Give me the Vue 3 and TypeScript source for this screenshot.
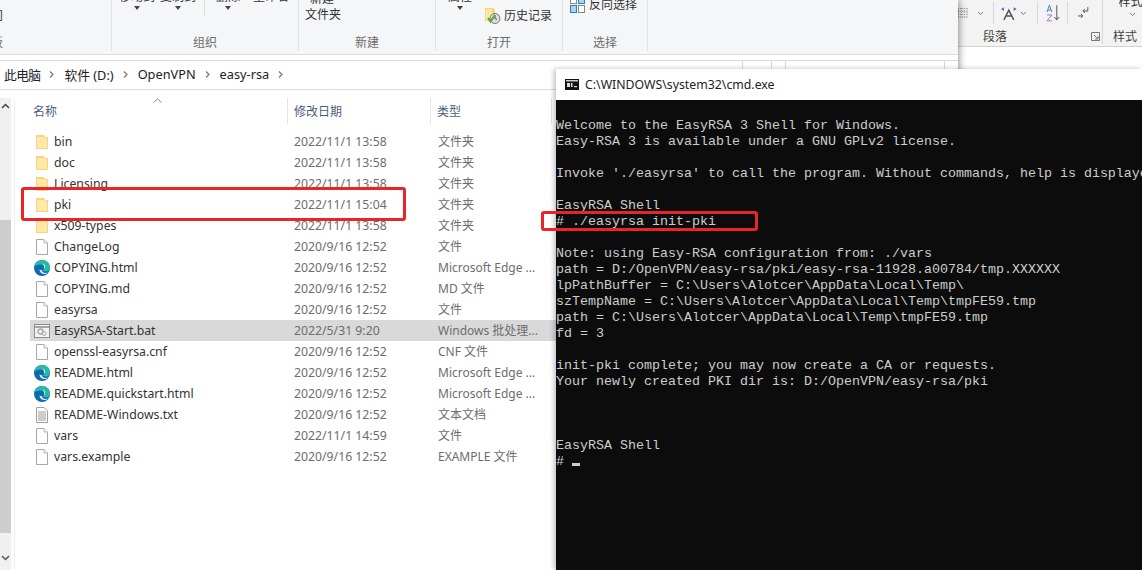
<script setup lang="ts">
interface FileRow { name: string; date: string; type: string; icon: string; active?: boolean }
const rows: FileRow[] = [
  { name: 'bin', date: '2022/11/1 13:58', type: '文件夹', icon: 'folder' },
  { name: 'doc', date: '2022/11/1 13:58', type: '文件夹', icon: 'folder' },
  { name: 'Licensing', date: '2022/11/1 13:58', type: '文件夹', icon: 'folder' },
  { name: 'pki', date: '2022/11/1 15:04', type: '文件夹', icon: 'folder' },
  { name: 'x509-types', date: '2022/11/1 13:58', type: '文件夹', icon: 'folder' },
  { name: 'ChangeLog', date: '2020/9/16 12:52', type: '文件', icon: 'file' },
  { name: 'COPYING.html', date: '2020/9/16 12:52', type: 'Microsoft Edge ...', icon: 'edge' },
  { name: 'COPYING.md', date: '2020/9/16 12:52', type: 'MD 文件', icon: 'file' },
  { name: 'easyrsa', date: '2020/9/16 12:52', type: '文件', icon: 'file' },
  { name: 'EasyRSA-Start.bat', date: '2022/5/31 9:20', type: 'Windows 批处理...', icon: 'bat', active: true },
  { name: 'openssl-easyrsa.cnf', date: '2020/9/16 12:52', type: 'CNF 文件', icon: 'file' },
  { name: 'README.html', date: '2020/9/16 12:52', type: 'Microsoft Edge ...', icon: 'edge' },
  { name: 'README.quickstart.html', date: '2020/9/16 12:52', type: 'Microsoft Edge ...', icon: 'edge' },
  { name: 'README-Windows.txt', date: '2020/9/16 12:52', type: '文本文档', icon: 'txt' },
  { name: 'vars', date: '2022/11/1 14:59', type: '文件', icon: 'file' },
  { name: 'vars.example', date: '2020/9/16 12:52', type: 'EXAMPLE 文件', icon: 'file' },
]
const crumbs = ['此电脑', '软件 (D:)', 'OpenVPN', 'easy-rsa']
const terminal = [
  'Welcome to the EasyRSA 3 Shell for Windows.',
  'Easy-RSA 3 is available under a GNU GPLv2 license.',
  '',
  "Invoke './easyrsa' to call the program. Without commands, help is displayed.",
  '',
  'EasyRSA Shell',
  '# ./easyrsa init-pki',
  '',
  'Note: using Easy-RSA configuration from: ./vars',
  'path = D:/OpenVPN/easy-rsa/pki/easy-rsa-11928.a00784/tmp.XXXXXX',
  'lpPathBuffer = C:\\Users\\Alotcer\\AppData\\Local\\Temp\\',
  'szTempName = C:\\Users\\Alotcer\\AppData\\Local\\Temp\\tmpFE59.tmp',
  'path = C:\\Users\\Alotcer\\AppData\\Local\\Temp\\tmpFE59.tmp',
  'fd = 3',
  '',
  'init-pki complete; you may now create a CA or requests.',
  'Your newly created PKI dir is: D:/OpenVPN/easy-rsa/pki',
  '',
  '',
  '',
  'EasyRSA Shell',
]
</script>

<template>
  <div class="desktop">
    <section class="word">
      <div class="word-ribbon">
        <div class="word-tools">
          <svg class="w-grid" width="10" height="10" viewBox="0 0 10 10"><path d="M0 .5h10M0 3.5h10M0 6.5h10M0 9.5h10M.5 0v10M3.5 0v10M6.5 0v10M9.5 0v10" stroke="#999" stroke-dasharray="1 1" fill="none" /></svg>
          <svg class="w-chev-a" width="7" height="5" viewBox="0 0 7 5"><path d="M1 1l2.500 2.500L6 1" stroke="#777" fill="none" /></svg>
          <i class="w-sep" />
          <svg class="w-ax" width="18" height="15" viewBox="0 0 18 15"><path d="M4 14L9 4l5 10M6 10h6" stroke="#555" stroke-width="1.500" fill="none" /><path d="M1 3l3-2v4zM17 3l-3-2v4z" fill="#2f7fc5" /></svg>
          <svg class="w-chev-b" width="7" height="5" viewBox="0 0 7 5"><path d="M1 1l2.500 2.500L6 1" stroke="#777" fill="none" /></svg>
          <i class="w-sep w-sep-b" />
          <svg class="w-sort" width="14" height="18" viewBox="0 0 14 18"><path d="M1 8L3.500 1 6 8M2 6h3" stroke="#3f84c6" fill="none" /><path d="M1 11h5L1 17h5" stroke="#a86fc0" fill="none" /><path d="M11 1v15M8.500 13l2.500 3 2.500-3" stroke="#555" fill="none" /></svg>
          <i class="w-sep w-sep-c" />
          <svg class="w-para" width="11" height="14" viewBox="0 0 11 14"><path d="M10 1v4H5M7 3L5 5l2 2" stroke="#555" fill="none" /><path d="M0 10h5M3 8l2 2-2 2" stroke="#555" fill="none" /></svg>
          <i class="w-sep w-sep-last" />
          <div class="w-style">
            <span class="w-style-top">样式</span>
            <svg width="7" height="5" viewBox="0 0 7 5"><path d="M1 1l2.500 2.500L6 1" stroke="#777" fill="none" /></svg>
          </div>
        </div>
        <div class="word-labels">
          <span class="w-lab">段落</span>
          <svg class="w-launch" width="9" height="9" viewBox="0 0 9 9"><path d="M.5 8.500V.5h8v8zM3 3l4 4M7 4v3H4" stroke="#777" fill="none" /></svg>
          <span class="w-lab2">样式</span>
        </div>
      </div>
    </section>

    <section class="explorer">
      <header class="ribbon">
        <div class="group g-left">
          <div class="g-top"><span class="cut-glyph">问</span></div>
          <div class="g-label cut-label">板</div>
        </div>
        <div class="group g-org">
          <div class="g-top">
            <div class="cmd c1"><span>移动到</span><b class="caret" /></div>
            <div class="cmd c2"><span>复制到</span><b class="caret" /></div>
            <i class="g-mini-sep" />
            <div class="cmd c3"><span>删除</span><b class="caret" /></div>
            <div class="cmd c4"><span>重命名</span></div>
          </div>
          <div class="g-label">组织</div>
        </div>
        <div class="group g-new">
          <div class="g-top new-top">
            <span class="new-a">新建</span>
            <span>文件夹</span>
          </div>
          <div class="g-label">新建</div>
        </div>
        <div class="group g-open">
          <div class="g-top open-top">
            <div class="cmd c5"><span>属性</span><b class="caret" /></div>
            <div class="hist">
              <svg width="16" height="17" viewBox="0 0 16 17"><path d="M0 1h8l2 2v11H0z" fill="#f6d67c" /><path d="M1 2h6v11H1z" fill="#fbe7a8" /><circle cx="10" cy="11.500" r="5" fill="#ddd" stroke="#777" /><path d="M10 8.500v3l2 1" stroke="#555" fill="none" /><path d="M3 11l2.500 3.500L10 8" stroke="#58a732" stroke-width="2" fill="none" /></svg>
              <span>历史记录</span>
            </div>
          </div>
          <div class="g-label">打开</div>
        </div>
        <div class="group g-select">
          <div class="g-top sel-top">
            <svg width="16" height="16" viewBox="0 0 16 16"><rect x=".5" y="-2.500" width="6" height="6" fill="#fff" stroke="#8a8a8a" /><rect x="8.500" y="-2.500" width="6" height="6" fill="#a9d3f2" stroke="#2f7fc5" /><rect x=".5" y="5.500" width="6" height="7" fill="#a9d3f2" stroke="#2f7fc5" /><rect x="8.500" y="5.500" width="6" height="7" fill="#fff" stroke="#8a8a8a" /></svg>
            <span>反向选择</span>
          </div>
          <div class="g-label">选择</div>
        </div>
        <div class="group g-rest" />
      </header>

      <nav class="addr">
        <div class="addr-path">
          <template v-for="c in crumbs" :key="c">
            <span class="crumb">{{ c }}</span>
            <svg class="crumb-chev" width="5" height="7" viewBox="0 0 5 7"><path d="M1 .5L4 3.500 1 6.500" stroke="#777" stroke-width="1.200" fill="none" /></svg>
          </template>
        </div>
        <div class="addr-drop" />
        <div class="addr-search" />
      </nav>

      <div class="main">
        <aside class="side">
          <div class="scrollbar">
            <svg class="sb-arrow" width="9" height="6" viewBox="0 0 9 6"><path d="M1 5l3.500-3.500L8 5" stroke="#444" stroke-width="1.500" fill="none" /></svg>
            <div class="sb-space" />
            <div class="sb-thumb" />
            <svg class="sb-arrow sb-down" width="9" height="6" viewBox="0 0 9 6"><path d="M1 1l3.500 3.500L8 1" stroke="#555" stroke-width="1.500" fill="none" /></svg>
          </div>
          <div class="side-line" />
        </aside>
        <div class="list">
          <div class="head">
            <div class="hc hc-name">名称
              <svg class="sort-up" width="9" height="5" viewBox="0 0 9 5"><path d="M.5 4.500l4-3.500 4 3.500" stroke="#888" fill="none" /></svg>
            </div>
            <div class="hc hc-date">修改日期</div>
            <div class="hc hc-type">类型</div>
          </div>
          <div class="rows">
            <div v-for="r in rows" :key="r.name" class="row" :class="{ active: r.active }">
              <span class="ico" :class="{ wide: r.icon === 'edge' || r.icon === 'bat' }">
                <svg v-if="r.icon === 'folder'" width="14" height="16" viewBox="0 0 14 16"><path d="M1 1h8l1 2h3v12H1z" fill="#f7d57e" /><path d="M2 3h7l1 1h2v10H2z" fill="#ffe9a6" /></svg>
                <svg v-else-if="r.icon === 'file'" width="14" height="16" viewBox="0 0 14 16"><path d="M1.500.5h7.500l3.500 3.500v11.500h-11z" fill="#fff" stroke="#a8a8a8" /><path d="M9 .5v3.500h3.500" fill="#f0f0f0" stroke="#bbb" /></svg>
                <svg v-else-if="r.icon === 'txt'" width="14" height="16" viewBox="0 0 14 16"><path d="M1.500.5h7.500l3.500 3.500v11.500h-11z" fill="#fff" stroke="#a0a0a0" /><path d="M3 5h8M3 7h8M3 9h8M3 11h8M3 13h8" stroke="#9a9a9a" /></svg>
                <svg v-else-if="r.icon === 'bat'" width="16" height="14" viewBox="0 0 16 14"><rect x=".5" y=".5" width="15" height="13" fill="#f3f3f3" stroke="#8d8d8d" /><path d="M1 3h14" stroke="#8d8d8d" stroke-width="1.500" /><circle cx="6.500" cy="7.500" r="2.500" fill="none" stroke="#a5a5a5" stroke-width="1.300" /><circle cx="10" cy="9.500" r="2" fill="none" stroke="#a5a5a5" /></svg>
                <svg v-else width="16" height="16" viewBox="0 0 16 16"><circle cx="8" cy="8" r="8" fill="#0f69b4" /><path d="M.1 7.300C.6 3 4 0 8 0c4.600 0 8 3.500 8 7.500 0 2.500-2 4-4.200 4-1.500 0-2.800-.5-3.300-1.200 1.400-.4 2-1.400 2-2.500 0-1.800-1.700-3.300-4-3.300C3.500 4.500 1 5.500.1 7.300z" fill="#2bb9a6" /><path d="M5.500 9.500c0 2.500 2 4.500 5 4.500 1.500 0 2.800-.6 3.800-1.500-.8.300-1.800.5-2.500.5-2.500 0-3.800-1.300-3.800-2.700-1-.1-1.800-.4-2.500-.8z" fill="#dff2fb" /><path d="M9 3.500c1.500.5 2.500 2 2.200 3.700-.2.800-.7 1.400-1.400 1.800.5-1 .4-3.200-.8-5.500z" fill="#bdeee0" /></svg>
              </span>
              <span class="name">{{ r.name }}</span>
              <span class="date">{{ r.date }}</span>
              <span class="type">{{ r.type }}</span>
            </div>
          </div>
        </div>
      </div>
    </section>

    <section class="cmd-win">
      <div class="cmd-title">
        <svg width="14" height="11" viewBox="0 0 14 11"><rect width="14" height="11" fill="#111" /><rect x="1" y="1" width="12" height="1.500" fill="#ccc" /><rect x="2" y="4" width="3" height="4" fill="#ddd" /><rect x="6" y="4" width="1.500" height="4" fill="#ddd" /><rect x="9" y="7" width="3" height="1.200" fill="#ddd" /></svg>
        <span>C:\WINDOWS\system32\cmd.exe</span>
      </div>
      <div class="console">
        <pre v-for="(l, i) in terminal" :key="i" class="line">{{ l }}</pre>
        <pre class="line prompt"># <i class="cursor" /></pre>
      </div>
    </section>

    <div class="mark mark-a" />
    <div class="mark mark-b" />
  </div>
</template>

<style scoped>
.desktop {
  position: relative;
  width: 1142px;
  height: 570px;
  overflow: hidden;
  background: #fff;
  font-family: "Noto Sans", "Noto Sans CJK SC", sans-serif;
  font-size: 12px;
  color: #333;
}
.explorer {
  position: absolute;
  left: 0;
  top: 0;
  width: 958px;
  height: 570px;
  background: #fff;
  box-shadow: 1px 0 7px rgba(0, 0, 0, 0.45);
  display: flex;
  flex-direction: column;
}
.ribbon {
  height: 54px;
  flex: none;
  display: flex;
  background: #f5f6f7;
  border-bottom: 1px solid #dadbdc;
  box-sizing: content-box;
}
.group {
  display: flex;
  flex-direction: column;
  flex: none;
  border-right: 1px solid #e2e3e4;
  height: 51px;
  position: relative;
}
.g-left { width: 111px; }
.g-org { width: 186px; }
.g-new { width: 136px; }
.g-open { width: 126px; }
.g-select { width: 84px; }
.g-rest { flex: 1; border-right: 0; }
.g-top {
  height: 35px;
  display: flex;
  overflow: hidden;
  position: relative;
  flex: none;
}
.g-label {
  height: 16px;
  text-align: center;
  color: #6c6c6c;
  line-height: 16px;
}
.cut-label { text-align: left; margin-left: -9px; }
.cut-glyph { margin: 6px 0 0 -9px; }
.cmd {
  display: flex;
  flex-direction: column;
  align-items: center;
  margin-top: -11px;
  line-height: 16px;
  height: 30px;
}
.caret {
  width: 0;
  height: 0;
  border: 3px solid transparent;
  border-top: 4px solid #444;
  border-bottom: 0;
  margin-top: 1px;
}
.c1 { margin-left: 7px; }
.c2 { margin-left: 5px; }
.g-mini-sep { width: 1px; height: 16px; background: #dcdcdc; margin-left: 8px; }
.c3 { margin-left: 11px; }
.c4 { margin-left: 13px; }
.new-top { flex-direction: column; padding-left: 6px; line-height: 16px; }
.new-a { margin-top: -9px; margin-left: 5px; }
.c5 { margin-left: 12px; }
.hist { display: flex; align-items: center; gap: 3px; margin: 6px 0 0 13px; height: 18px; }
.sel-top { align-items: flex-start; padding-left: 7px; gap: 3px; line-height: 14px; }
.sel-top span { margin-top: -2px; }
.addr {
  margin-top: 5px;
  height: 30px;
  flex: none;
  display: flex;
  border-top: 1px solid #d9d9d9;
  border-bottom: 1px solid #d9d9d9;
  box-sizing: border-box;
  background: #fff;
}
.addr-path {
  width: 742px;
  display: flex;
  align-items: center;
  padding: 0 0 2px 4px;
  box-sizing: border-box;
  color: #222;
  font-size: 12.75px;
}
.crumb:first-child { letter-spacing: -0.6px; }
.crumb-chev { margin: 0 10px 0 9px; }
.addr-drop { width: 30px; border: 1px solid #d9d9d9; border-top: 0; border-bottom: 0; box-sizing: border-box; }
.addr-search { width: 160px; margin-left: 13px; border: 1px solid #d9d9d9; border-top: 0; border-bottom: 0; box-sizing: border-box; }
.main { flex: 1; display: flex; min-height: 0; margin-top: 8px; }
.side { width: 30px; flex: none; display: flex; }
.scrollbar {
  width: 11px;
  background: #f0f0f0;
  display: flex;
  flex-direction: column;
  align-items: center;
  padding-top: 5px;
  box-sizing: border-box;
  height: 472px;
}
.sb-arrow { flex: none; }
.sb-space { height: 111px; flex: none; }
.sb-thumb { width: 100%; height: 313px; background: #cdcdcd; flex: none; }
.sb-down { margin-top: 22px; }
.side-line { width: 1px; margin-left: 3px; background: #efefef; }
.list { flex: 1; min-width: 0; }
.head { display: flex; height: 26px; align-items: center; color: #4c607a; }
.hc { height: 26px; line-height: 28px; box-sizing: border-box; position: relative; }
.hc-name { width: 258px; padding-left: 3px; border-right: 1px solid #e5e5e5; }
.hc-date { width: 143px; padding-left: 6px; border-right: 1px solid #e5e5e5; }
.hc-type { width: 121px; padding-left: 6px; border-right: 1px solid #e5e5e5; }
.sort-up { position: absolute; left: 123px; top: 0; }
.rows { margin-top: 7px; }
.row { height: 21px; display: flex; align-items: center; line-height: 21px; font-size: 12.25px; }
.row.active { background: #d9d9d9; }
.ico { width: 24px; padding-left: 5px; box-sizing: border-box; flex: none; display: flex; align-items: center; justify-content: flex-start; }
.ico.wide { padding-left: 4px; }
.name { width: 240px; flex: none; color: #333; white-space: nowrap; }
.date { width: 144px; flex: none; color: #6d6d6d; white-space: nowrap; }
.type { flex: 1; color: #6d6d6d; white-space: nowrap; font-size: 12px; }

.word {
  position: absolute;
  left: 958px;
  top: 0;
  right: 0;
  height: 70px;
  background: #fff;
}
.word-ribbon { height: 46px; background: #f3f3f3; border-bottom: 1px solid #d2d2d2; }
.word-tools { height: 26px; display: flex; align-items: center; }
.w-chev-a { margin-left: 9px; }
.w-sep { width: 1px; height: 22px; background: #d8d8d8; margin-left: 9px; }
.w-ax { margin-left: 6px; }
.w-chev-b { margin-left: 3px; }
.w-sep-b { margin-left: 10px; }
.w-sort { margin-left: 8px; }
.w-sep-c { margin-left: 7px; }
.w-para { margin-left: 10px; }
.w-sep-last { height: 44px; margin-left: 13px; align-self: flex-start; }
.w-style { display: flex; flex-direction: column; align-items: flex-start; margin-left: 16px; align-self: flex-start; overflow: hidden; height: 28px; }
.w-style-top { margin-top: -6px; line-height: 16px; white-space: nowrap; }
.w-style svg { margin-top: 2px; margin-left: 10px; }
.word-labels { display: flex; align-items: center; height: 20px; }
.w-lab { margin-left: 25px; color: #444; }
.w-launch { margin-left: 84px; }
.w-lab2 { margin-left: 13px; color: #444; }

.cmd-win {
  position: absolute;
  left: 556px;
  top: 69px;
  width: 586px;
  height: 501px;
  display: flex;
  flex-direction: column;
  box-shadow: -2px 0 5px rgba(0, 0, 0, 0.25);
}
.cmd-title {
  height: 31px;
  flex: none;
  background: #fff;
  display: flex;
  align-items: center;
  gap: 6px;
  padding-left: 9px;
  color: #222;
  font-size: 12.3px;
}
.console {
  flex: 1;
  background: #0c0c0c;
  padding-top: 18px;
  overflow: hidden;
}
.line {
  margin: 0;
  height: 16px;
  line-height: 16px;
  color: #cccccc;
  font-family: "Liberation Mono", monospace;
  font-size: 13.33px;
  white-space: pre;
}
.cursor {
  display: inline-block;
  width: 8px;
  height: 3px;
  background: #ccc;
  vertical-align: -1px;
}
.mark {
  position: absolute;
  border: 3px solid #e8262a;
  border-radius: 3px;
  box-sizing: border-box;
}
.mark-a { left: 21px; top: 187px; width: 385px; height: 34px; }
.mark-b { left: 541px; top: 211px; width: 217px; height: 20px; }
</style>
